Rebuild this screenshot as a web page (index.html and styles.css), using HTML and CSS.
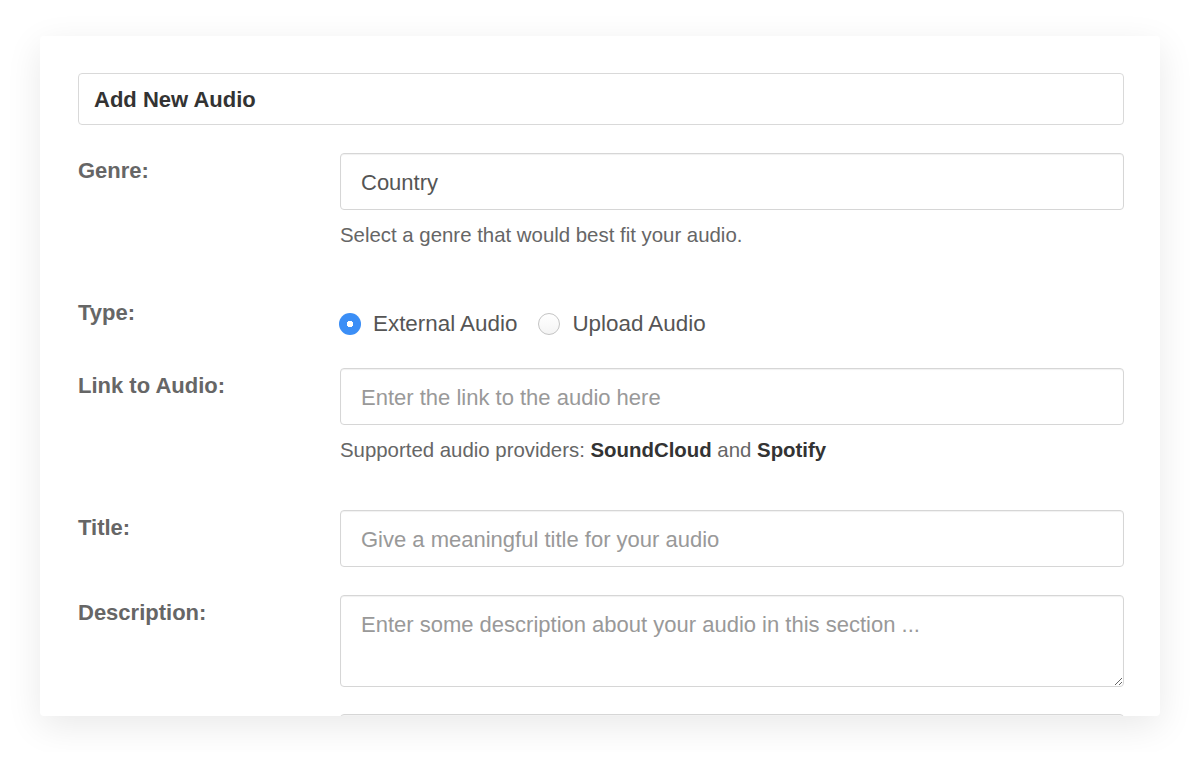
FILE: index.html
```html
<!DOCTYPE html>
<html lang="en">
<head>
	<meta charset="UTF-8">
	<meta name="viewport" content="width=device-width, initial-scale=1">
	<title>Add New Audio</title>
	<link rel="stylesheet" href="styles.css">
</head>
<body>
	<div class="card">
		<h3 class="card-heading">Add New Audio</h3>
		<form class="audio-form">
			<div class="field">
				<label class="field-label" for="genre">Genre:</label>
				<div class="field-body">
					<input type="text" id="genre" class="control" value="Country">
					<p class="help">Select a genre that would best fit your audio.</p>
				</div>
			</div>
			<div class="field field-type">
				<span class="field-label">Type:</span>
				<div class="field-body radios">
					<label class="radio"><input type="radio" name="type" checked> External Audio</label>
					<label class="radio"><input type="radio" name="type"> Upload Audio</label>
				</div>
			</div>
			<div class="field">
				<label class="field-label" for="link">Link to Audio:</label>
				<div class="field-body">
					<input type="text" id="link" class="control" placeholder="Enter the link to the audio here">
					<p class="help">Supported audio providers: <b>SoundCloud</b> and <b>Spotify</b></p>
				</div>
			</div>
			<div class="field">
				<label class="field-label" for="title">Title:</label>
				<div class="field-body">
					<input type="text" id="title" class="control" placeholder="Give a meaningful title for your audio">
				</div>
			</div>
			<div class="field field-description">
				<label class="field-label" for="description">Description:</label>
				<div class="field-body">
					<textarea id="description" class="control" rows="2" placeholder="Enter some description about your audio in this section ..."></textarea>
				</div>
			</div>
			<div class="field">
				<span class="field-label"></span>
				<div class="field-body">
					<input type="text" class="control" aria-label="Tags">
				</div>
			</div>
		</form>
	</div>
</body>
</html>
```

FILE: styles.css
```css
* {
	box-sizing: border-box;
}

body {
	margin: 0;
	background-color: #fff;
	font-family: 'Liberation Sans', Arial, sans-serif;
}

.card {
	width: 1120px;
	height: 680px;
	margin: 36px 40px;
	padding: 37px 36px 0 38px;
	overflow: hidden;
	background-color: #fff;
	border-radius: 4px;
	box-shadow: 0 10px 36px rgba(0,0,0,0.09);
}

.card-heading {
	margin: 0 0 28px;
	height: 52px;
	padding: 2px 15px 0;
	display: flex;
	align-items: center;
	font-size: 22px;
	font-weight: bold;
	color: #333;
	border: 1px solid #d9d9d9;
	border-radius: 4px;
}

.field {
	display: flex;
	margin-bottom: 28px;
}

.field-label {
	width: 262px;
	flex: none;
	padding-top: 3px;
	font-size: 22px;
	line-height: 30px;
	font-weight: bold;
	color: #666;
}

.field-body {
	flex: 1;
}

.control {
	display: block;
	width: 100%;
	height: 57px;
	margin: 0;
	padding: 2px 20px 0;
	font-family: inherit;
	font-size: 22px;
	color: #555;
	background: #fff;
	border: 1px solid #d6d6d6;
	border-radius: 4px;
	box-shadow: inset 0 1px 1px rgba(0,0,0,0.06);
	outline: none;
}

.control::placeholder {
	color: #999;
}

textarea.control {
	height: 92px;
	padding-top: 15px;
	line-height: 28px;
	resize: vertical;
}

.help {
	margin: 11px 0 18px;
	font-size: 20.4px;
	line-height: 28px;
	color: #666;
}

.help b {
	color: #333;
}

.field-type {
	margin-bottom: 16px;
}

.field-description {
	margin-bottom: 27px;
}

.radios {
	display: flex;
	align-items: center;
	height: 57px;
	gap: 22px;
}

.radio {
	display: flex;
	align-items: center;
	gap: 12px;
	font-size: 22.4px;
	color: #555;
}

.radio input {
	-webkit-appearance: none;
	appearance: none;
	width: 22px;
	height: 22px;
	margin: 0 0 0 -1px;
	border: 1px solid #c4c4c4;
	border-radius: 50%;
	background: linear-gradient(#fff, #f4f4f4);
}

.radio input:checked {
	border: none;
	background: #3b8ef6 radial-gradient(circle, #fff 0 3px, transparent 3.5px);
}
```
